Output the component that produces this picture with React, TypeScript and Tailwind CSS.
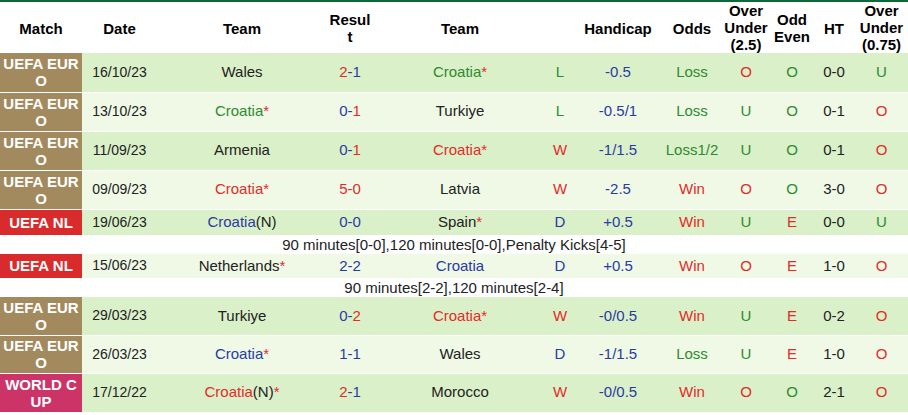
type Part = { t: string; c: string };

const RED = "text-[#e42b2b]";
const BLUE = "text-[#2a3aa5]";
const GREEN = "text-[#2e8b2e]";
const DARK = "text-[#222]";

type Row = {
   comp: "EURO" | "NL" | "WC";
   date: string;
   home: Part[];
   score: Part[];
   away: Part[];
   wl: Part;
   hcp: string;
   odds: Part;
   ou: Part;
   oe: Part;
   ht: string;
   ou2: Part;
   note?: string;
   h: string;
};

const p = (t: string, c: string): Part => ({ t, c });
const star = p("*", RED);

const rows: Row[] = [
   { comp: "EURO", date: "16/10/23", home: [p("Wales", DARK)], score: [p("2", RED), p("-1", BLUE)], away: [p("Croatia", GREEN), star], wl: p("L", GREEN), hcp: "-0.5", odds: p("Loss", GREEN), ou: p("O", RED), oe: p("O", GREEN), ht: "0-0", ou2: p("U", GREEN), h: "h-[39px]" },
   { comp: "EURO", date: "13/10/23", home: [p("Croatia", GREEN), star], score: [p("0-", BLUE), p("1", RED)], away: [p("Turkiye", DARK)], wl: p("L", GREEN), hcp: "-0.5/1", odds: p("Loss", GREEN), ou: p("U", GREEN), oe: p("O", GREEN), ht: "0-1", ou2: p("O", RED), h: "h-[39px]" },
   { comp: "EURO", date: "11/09/23", home: [p("Armenia", DARK)], score: [p("0-", BLUE), p("1", RED)], away: [p("Croatia*", RED)], wl: p("W", RED), hcp: "-1/1.5", odds: p("Loss1/2", GREEN), ou: p("U", GREEN), oe: p("O", GREEN), ht: "0-1", ou2: p("O", RED), h: "h-[39px]" },
   { comp: "EURO", date: "09/09/23", home: [p("Croatia*", RED)], score: [p("5-0", RED)], away: [p("Latvia", DARK)], wl: p("W", RED), hcp: "-2.5", odds: p("Win", RED), ou: p("O", RED), oe: p("O", GREEN), ht: "3-0", ou2: p("O", RED), h: "h-[39px]" },
   { comp: "NL", date: "19/06/23", home: [p("Croatia", BLUE), p("(N)", DARK)], score: [p("0-0", BLUE)], away: [p("Spain", DARK), star], wl: p("D", BLUE), hcp: "+0.5", odds: p("Win", RED), ou: p("U", GREEN), oe: p("E", RED), ht: "0-0", ou2: p("U", GREEN), note: "90 minutes[0-0],120 minutes[0-0],Penalty Kicks[4-5]", h: "h-[26px]" },
   { comp: "NL", date: "15/06/23", home: [p("Netherlands", DARK), star], score: [p("2-2", BLUE)], away: [p("Croatia", BLUE)], wl: p("D", BLUE), hcp: "+0.5", odds: p("Win", RED), ou: p("O", RED), oe: p("E", RED), ht: "1-0", ou2: p("O", RED), note: "90 minutes[2-2],120 minutes[2-4]", h: "h-[25px]" },
   { comp: "EURO", date: "29/03/23", home: [p("Turkiye", DARK)], score: [p("0-", BLUE), p("2", RED)], away: [p("Croatia*", RED)], wl: p("W", RED), hcp: "-0/0.5", odds: p("Win", RED), ou: p("U", GREEN), oe: p("E", RED), ht: "0-2", ou2: p("O", RED), h: "h-[38px]" },
   { comp: "EURO", date: "26/03/23", home: [p("Croatia", BLUE), star], score: [p("1-1", BLUE)], away: [p("Wales", DARK)], wl: p("D", BLUE), hcp: "-1/1.5", odds: p("Loss", GREEN), ou: p("U", GREEN), oe: p("E", RED), ht: "1-0", ou2: p("O", RED), h: "h-[38px]" },
   { comp: "WC", date: "17/12/22", home: [p("Croatia", RED), p("(N)", DARK), star], score: [p("2", RED), p("-1", BLUE)], away: [p("Morocco", DARK)], wl: p("W", RED), hcp: "-0/0.5", odds: p("Win", RED), ou: p("O", RED), oe: p("O", GREEN), ht: "2-1", ou2: p("O", RED), h: "h-[39px]" },
];

const compStyle = {
   EURO: { label: "UEFA EURO", bg: "bg-[#a28a5e]" },
   NL: { label: "UEFA NL", bg: "bg-[#d92b2b]" },
   WC: { label: "WORLD CUP", bg: "bg-[#cc3468]" },
};

function Parts({ parts }: { parts: Part[] }) {
   return (
      <>
         {parts.map((x, i) => (
            <span key={i} className={x.c}>
               {x.t}
            </span>
         ))}
      </>
   );
}

export default function App() {
   return (
      <div className="w-[908px] h-[415px] overflow-hidden bg-white font-['Liberation_Sans',Arial,sans-serif] text-[15px] text-[#222]">
         <table className="w-[908px] table-fixed border-collapse border-t-2 border-[#0b6a35] text-center">
            <colgroup>
               <col className="w-[82px]" />
               <col className="w-[75px]" />
               <col className="w-[170px]" />
               <col className="w-[46px]" />
               <col className="w-[174px]" />
               <col className="w-[26px]" />
               <col className="w-[90px]" />
               <col className="w-[58px]" />
               <col className="w-[50px]" />
               <col className="w-[42px]" />
               <col className="w-[42px]" />
               <col className="w-[53px]" />
            </colgroup>
            <thead>
               <tr className="h-[51px] text-[15px] font-bold leading-[17px] text-black">
                  <th className="pt-[2px]">Match</th>
                  <th className="pt-[2px]">Date</th>
                  <th className="pt-[2px]">Team</th>
                  <th>
                     <span className="mx-auto block w-[42px] break-all">Result</span>
                  </th>
                  <th className="pt-[2px]">Team</th>
                  <th></th>
                  <th className="pt-[2px]">Handicap</th>
                  <th className="pt-[2px]">Odds</th>
                  <th>
                     Over
                     <br />
                     Under
                     <br />
                     (2.5)
                  </th>
                  <th>
                     Odd
                     <br />
                     Even
                  </th>
                  <th className="pt-[2px]">HT</th>
                  <th>
                     Over
                     <br />
                     Under
                     <br />
                     (0.75)
                  </th>
               </tr>
            </thead>
            <tbody>
               {rows.map((r, i) => {
                  const bg = i % 2 === 0 ? "bg-[#daf0c8]" : "bg-[#eff9e6]";
                  const cs = compStyle[r.comp];
                  return [
                     <tr key={`r${i}`} className={`${r.h} ${bg} border-b border-white`}>
                        <td className={`${cs.bg} px-[1px] text-[15px] font-bold leading-[17px] text-white break-all`}>{cs.label}</td>
                        <td className="text-[14px]">{r.date}</td>
                        <td>
                           <Parts parts={r.home} />
                        </td>
                        <td>
                           <Parts parts={r.score} />
                        </td>
                        <td>
                           <Parts parts={r.away} />
                        </td>
                        <td className={r.wl.c}>{r.wl.t}</td>
                        <td className={BLUE}>{r.hcp}</td>
                        <td className={r.odds.c}>{r.odds.t}</td>
                        <td className={r.ou.c}>{r.ou.t}</td>
                        <td className={r.oe.c}>{r.oe.t}</td>
                        <td>{r.ht}</td>
                        <td className={r.ou2.c}>{r.ou2.t}</td>
                     </tr>,
                     r.note ? (
                        <tr key={`n${i}`} className="h-[18px] bg-white">
                           <td colSpan={12} className="leading-[18px]">
                              {r.note}
                           </td>
                        </tr>
                     ) : null,
                  ];
               })}
            </tbody>
         </table>
      </div>
   );
}
